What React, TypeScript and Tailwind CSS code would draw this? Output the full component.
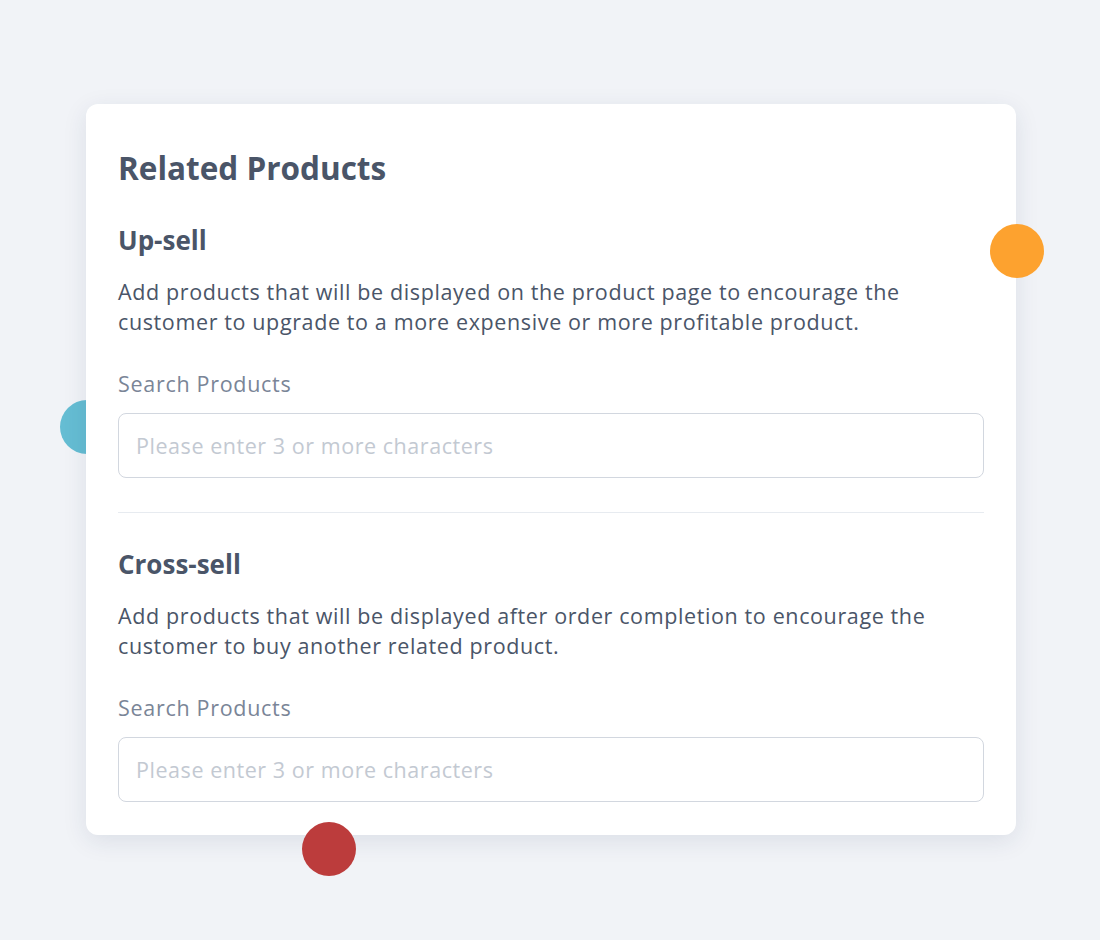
import React from "react";

function Section({ title, desc }: { title: string; desc: React.ReactNode }) {
  return (
    <div>
      <h3 className="text-[26px] font-bold leading-[30px] text-[#4a5568]">{title}</h3>
      <p className="mt-[22px] text-[21.5px] leading-[30px] tracking-[0.62px] text-[#4a5568]">{desc}</p>
      <label className="mt-[32px] block text-[21.5px] leading-[30px] tracking-[0.7px] text-[#7a8597]">
        Search Products
      </label>
      <input
        className="mt-[14px] block h-[65px] w-full rounded-[8px] border border-[#d2d7df] bg-white px-[17px] text-[21.5px] tracking-[0.55px] text-[#4a5568] outline-none placeholder:text-[#c3c9d2]"
        placeholder="Please enter 3 or more characters"
      />
    </div>
  );
}

export default function App() {
  return (
    <div
      className="relative min-h-[940px] w-full bg-[#f1f3f7] pl-[86px] pt-[104px]"
      style={{ fontFamily: "'Open Sans', 'Noto Sans', sans-serif" }}
    >
      <div className="absolute left-[60px] top-[400px] h-[54px] w-[54px] rounded-full bg-[#65bdd3]" />
      <div className="relative w-[930px] rounded-[12px] bg-white px-[32px] pb-[33px] pt-[44px] shadow-[0_6px_24px_rgba(30,50,90,0.10)]">
        <h2 className="text-[31.5px] font-bold leading-[40px] text-[#4a5568]">Related Products</h2>
        <div className="mt-[37px]">
          <Section
            title="Up-sell"
            desc={
              <>
                Add products that will be displayed on the product page to encourage the
                <br />
                customer to upgrade to a more expensive or more profitable product.
              </>
            }
          />
        </div>
        <div className="mt-[34px] border-t border-[#e7ebf0]" />
        <div className="mt-[36px]">
          <Section
            title="Cross-sell"
            desc={
              <>
                Add products that will be displayed after order completion to encourage the
                <br />
                customer to buy another related product.
              </>
            }
          />
        </div>
      </div>
      <div className="absolute left-[990px] top-[224px] h-[54px] w-[54px] rounded-full bg-[#fda22f]" />
      <div className="absolute left-[302px] top-[822px] h-[54px] w-[54px] rounded-full bg-[#bc3c3c]" />
    </div>
  );
}
